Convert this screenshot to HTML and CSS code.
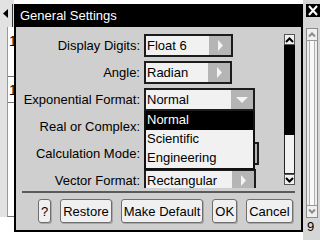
FILE: index.html
```html
<!DOCTYPE html>
<html>
<head>
	<title>General Settings</title>
	<link rel="stylesheet" href="styles.css">
</head>
<body>

	<div class="screen">
		<div class="leftStrip">
			<div class="pageTab">
				<svg width="5" height="9" viewBox="0 0 5 9"><polygon points="5,0 0,4.5 5,9" fill="#000"/></svg>
			</div>
			<div class="history">
				<div class="entry first">1</div>
				<div class="entry">1</div>
			</div>
			<div class="leftFoot"></div>
		</div>
		<div class="mainArea"></div>
		<div class="rightStrip">
			<div class="closeBox">
				<svg width="14" height="13" viewBox="0 0 14 13"><rect width="14" height="13" fill="#000"/><path d="M3 2 L11 11 M11 2 L3 11" stroke="#fff" stroke-width="2"/></svg>
			</div>
			<div class="outerScroll">
				<div class="outerBtn"><svg width="8" height="5" viewBox="0 0 8 5"><polyline points="1,4.5 4,1.5 7,4.5" fill="none" stroke="#8a8a8a" stroke-width="2"/></svg></div>
				<div class="outerTrack"></div>
				<div class="outerBtn"><svg width="8" height="5" viewBox="0 0 8 5"><polyline points="1,0.5 4,3.5 7,0.5" fill="none" stroke="#8a8a8a" stroke-width="2"/></svg></div>
			</div>
			<div class="lineNum">9</div>
		</div>
	</div>

	<div class="dialog">
		<div class="titleBar">General Settings</div>
		<div class="dialogBody">
			<div class="rows">
				<div class="row">
					<span class="label">Display Digits:</span>
					<div class="select digits"><span class="value">Float 6</span><span class="arrow"><svg width="5" height="11" viewBox="0 0 5 11"><polygon points="0,0 5,5.5 0,11" fill="#f4f4f4"/></svg></span></div>
				</div>
				<div class="row">
					<span class="label">Angle:</span>
					<div class="select angle"><span class="value">Radian</span><span class="arrow"><svg width="5" height="11" viewBox="0 0 5 11"><polygon points="0,0 5,5.5 0,11" fill="#f4f4f4"/></svg></span></div>
				</div>
				<div class="row">
					<span class="label">Exponential Format:</span>
					<div class="select expo"><span class="value">Normal</span><span class="arrow"><svg width="12" height="6" viewBox="0 0 12 6"><polygon points="0,0 12,0 6,6" fill="#f4f4f4"/></svg></span>
						<div class="menu">
							<div class="item sel">Normal</div>
							<div class="item">Scientific</div>
							<div class="item">Engineering</div>
						</div>
					</div>
				</div>
				<div class="row">
					<span class="label">Real or Complex:</span>
					<div class="select real"><span class="value"></span><span class="arrow"></span></div>
				</div>
				<div class="row">
					<span class="label">Calculation Mode:</span>
					<div class="select calc"><span class="value"></span><span class="arrow"></span></div>
				</div>
				<div class="row">
					<span class="label">Vector Format:</span>
					<div class="select vector"><span class="value">Rectangular</span><span class="arrow"><svg width="5" height="11" viewBox="0 0 5 11"><polygon points="0,0 5,5.5 0,11" fill="#f4f4f4"/></svg></span></div>
				</div>
			</div>
			<div class="vscroll">
				<div class="vbtn"><svg width="9" height="6" viewBox="0 0 9 6"><polyline points="1,5 4.5,1.5 8,5" fill="none" stroke="#000" stroke-width="2"/></svg></div>
				<div class="thumb"></div>
				<div class="vtrack"></div>
				<div class="vbtn"><svg width="9" height="6" viewBox="0 0 9 6"><polyline points="1,1 4.5,4.5 8,1" fill="none" stroke="#000" stroke-width="2"/></svg></div>
			</div>
		</div>
		<div class="separator"></div>
		<div class="buttons">
			<button class="btn">?</button>
			<button class="btn">Restore</button>
			<button class="btn">Make Default</button>
			<button class="btn">OK</button>
			<button class="btn">Cancel</button>
		</div>
	</div>

</body>
</html>
```

FILE: styles.css
```css
body {
	margin : 0;
	font-family : "Liberation Sans", Arial, sans-serif;
	font-size : 13px;
	color : #000;
}
.screen {
	display : flex;
	width : 320px;
	height : 240px;
	overflow : hidden;
	background : #fff;
}

/* page behind the dialog */
.leftStrip {
	width : 14px;
	display : flex;
	flex-direction : column;
	background : #e2e2e2;
}
.pageTab {
	height : 23px;
	width : 13px;
	margin-top : 4px;
	box-sizing : border-box;
	border-right : 1px solid #333;
	padding : 5px 0 0 3px;
}
.pageTab svg {
	display : block;
}
.history {
	flex : 1;
	margin-left : 7px;
	background : #fff;
	border-left : 1px solid #9a9a9a;
	border-bottom : 1px solid #777;
}
.entry {
	font-size : 14px;
	line-height : 16px;
	padding : 5px 0 0 1px;
	border-bottom : 1px solid #777;
}
.entry.first {
	height : 43px;
	padding-top : 6px;
}
.entry + .entry {
	height : 20px;
}
.leftFoot {
	height : 23px;
	background : #fff;
}
.mainArea {
	flex : 1;
	background : #fff;
}
.rightStrip {
	width : 17px;
	display : flex;
	flex-direction : column;
	background : #d6d6d6;
}
.closeBox {
	margin : 4px 0 0 3px;
	height : 13px;
}
.closeBox svg {
	display : block;
}
.outerScroll {
	margin : 11px 0 0 3px;
	width : 12px;
	height : 190px;
	box-sizing : border-box;
	border : 1px solid #8c8c8c;
	background : #efefef;
	display : flex;
	flex-direction : column;
}
.outerBtn {
	height : 11px;
	display : flex;
	align-items : center;
	justify-content : center;
	border-bottom : 1px solid #9a9a9a;
}
.outerBtn:last-child {
	border-bottom : none;
	border-top : 1px solid #9a9a9a;
}
.outerTrack {
	flex : 1;
	margin : 0 2px;
	border-left : 1px solid #b0b0b0;
	border-right : 1px solid #b0b0b0;
	background : #fafafa;
}
.lineNum {
	margin : 2px 0 0 4px;
	line-height : 14px;
}

/* dialog */
.dialog {
	position : absolute;
	left : 14px;
	top : 4px;
	width : 289px;
	height : 228px;
	box-sizing : border-box;
	border : 2px solid #000;
	background : #cfcfcf;
}
.titleBar {
	height : 21px;
	line-height : 19px;
	background : #000;
	color : #fff;
	padding-left : 4px;
}
.dialogBody {
	display : flex;
	height : 155px;
	padding : 6px 6px 0 0;
}
.rows {
	flex : 1;
	overflow : hidden;
	padding-top : 1px;
}
.row {
	display : flex;
	align-items : center;
	height : 23px;
	margin-bottom : 4px;
}
.label {
	width : 124px;
	margin-right : 4px;
	text-align : right;
	white-space : nowrap;
}
.select {
	position : relative;
	display : flex;
	height : 23px;
	box-sizing : border-box;
	border : 2px solid #1c1c1c;
	background : #f1f1f1;
}
.value {
	flex : 1;
	padding-left : 1px;
	line-height : 19px;
	white-space : nowrap;
}
.arrow {
	width : 22px;
	background : #b5b5b5;
	display : flex;
	align-items : center;
	justify-content : center;
}
.digits {
	width : 89px;
}
.angle {
	width : 88px;
}
.expo {
	width : 111px;
}
.real {
	width : 100px;
}
.calc {
	width : 115px;
}
.vector {
	width : 112px;
}
.menu {
	position : absolute;
	left : -2px;
	top : 21px;
	width : 111px;
	box-sizing : border-box;
	border : 2px solid #111;
	border-top : none;
	background : #f1f1f1;
	z-index : 5;
}
.item {
	height : 19px;
	line-height : 18px;
	padding-left : 1px;
}
.item.sel {
	background : #000;
	color : #fff;
}
.vscroll {
	width : 11px;
	height : 151px;
	margin-top : 1px;
	display : flex;
	flex-direction : column;
}
.vbtn {
	height : 11px;
	box-sizing : border-box;
	border : 1px solid #555;
	background : #f0f0f0;
	display : flex;
	align-items : center;
	justify-content : center;
}
.thumb {
	height : 90px;
	background : #000;
}
.vtrack {
	flex : 1;
	box-sizing : border-box;
	border : 1px solid #222;
	border-top : none;
	background : #f2f2f2;
}
.separator {
	height : 2px;
	margin : 3px 6px 0 6px;
	background : #5a5a5a;
}
.buttons {
	display : flex;
	gap : 9px;
	padding : 6px 0 0 22px;
}
.btn {
	height : 24px;
	box-sizing : border-box;
	border : 1px solid #6e6e6e;
	border-radius : 3px;
	background : #f0f0f0;
	padding : 0 2px;
	margin : 0;
	font-family : "Liberation Sans", Arial, sans-serif;
	font-size : 13px;
	color : #000;
	box-shadow : 1px 1px 0 #a8a8a8;
}
```
